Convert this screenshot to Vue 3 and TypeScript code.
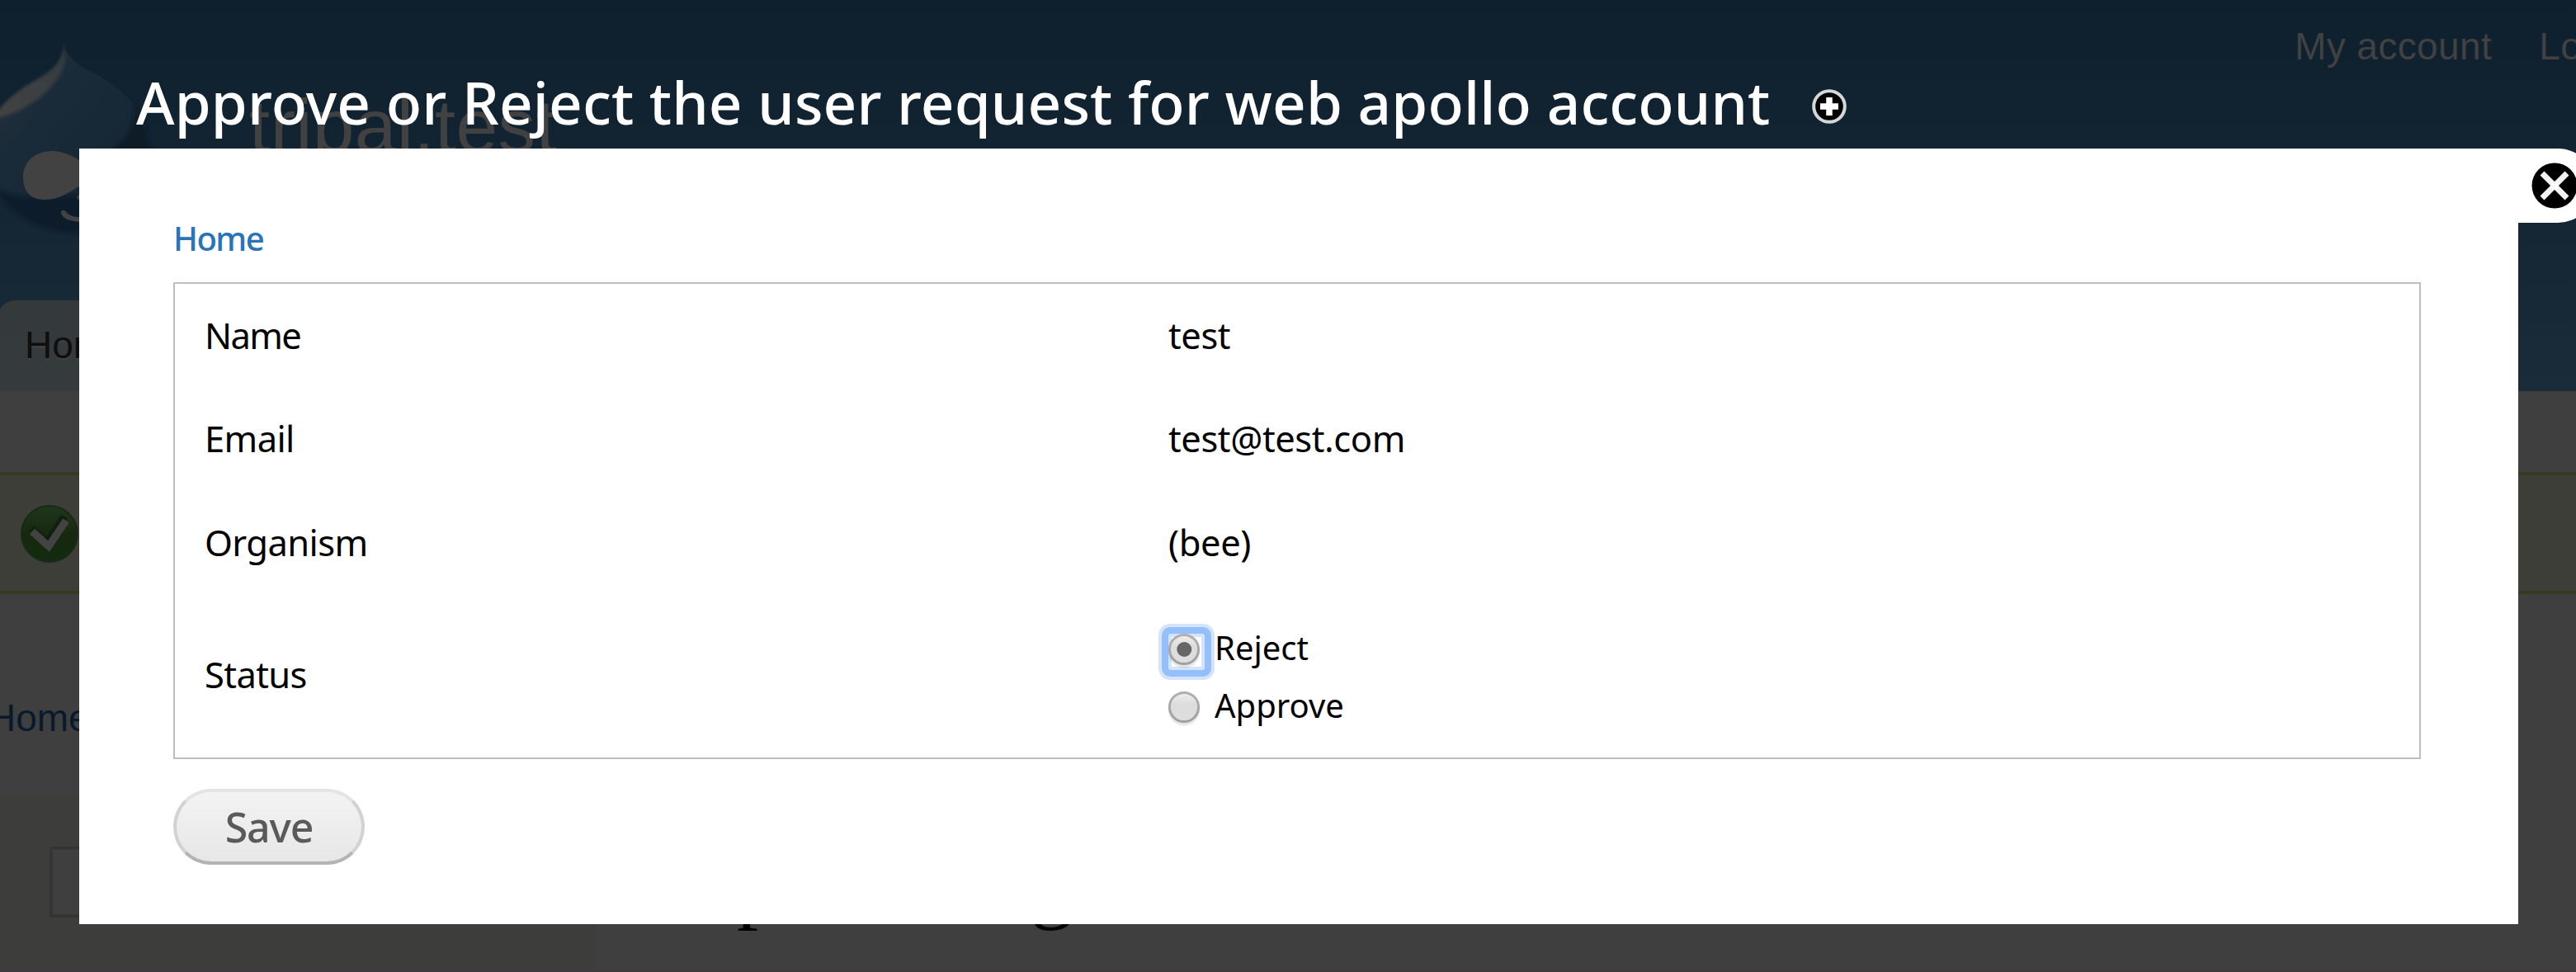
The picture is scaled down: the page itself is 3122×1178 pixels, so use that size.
<script setup lang="ts">
import { ref } from 'vue'

interface Row {
  label: string
  value: string
}

const rows: Row[] = [
  { label: 'Name', value: 'test' },
  { label: 'Email', value: 'test@test.com' },
  { label: 'Organism', value: '(bee)' },
]
const options: string[] = ['Reject', 'Approve']
const status = ref<string>('Reject')
</script>

<template>
  <div class="screen">
    <div class="page">
      <header class="header">
        <div class="top">
          <svg class="logo" width="190" height="290" viewBox="0 0 190 290">
            <defs>
              <linearGradient id="drop" x1="0" y1="0" x2="1" y2="1">
                <stop offset="0" stop-color="#2a343c" />
                <stop offset=".35" stop-color="#192a38" />
                <stop offset=".65" stop-color="#162735" />
                <stop offset="1" stop-color="#101d28" />
              </linearGradient>
              <linearGradient id="shine" x1="1" y1="0" x2="0" y2="1">
                <stop offset="0" stop-color="#343b40" />
                <stop offset="1" stop-color="#444444" />
              </linearGradient>
              <filter id="soft" x="-10%" y="-10%" width="120%" height="120%">
                <feGaussianBlur stdDeviation="2" />
              </filter>
            </defs>
            <path d="M77 53C80 66 90 76 105 84C145 103 182 135 182 184C182 240 137 281 84 281C48 281 12 262 -6 226V138C10 118 28 106 46 96C66 84 76 74 77 53Z" fill="url(#drop)" />
            <path d="M162 128C166 158 146 178 128 188L182 188C182 164 175 143 162 128Z" fill="#101c26" filter="url(#soft)" />
            <path d="M-6 228C25 245 60 236 100 238V282C50 284 12 262 -6 228Z" fill="#111f2a" filter="url(#soft)" />
            <path d="M77 57C79 66 80 76 75 86C62 112 30 136 -4 143V137C10 118 28 106 46 96C66 84 76 74 77 57Z" fill="url(#shine)" filter="url(#soft)" />
            <path d="M28 215C28 195 43 183 64 183C80 184 90 190 100 197V224C84 232 73 242 55 242C37 242 28 232 28 215Z" fill="#424242" />
            <path d="M93 240Q96 233 102 232V246Z" fill="#424242" />
            <path d="M74 257C76 253 79 255 82 259C88 263 94 263 102 264V269C86 269 74 265 74 257Z" fill="#424242" />
          </svg>
          <div class="site-name">tripal.test</div>
          <nav class="user-menu"><span>My account</span><span>Log out</span></nav>
        </div>
        <div class="tab">Home</div>
      </header>
      <div class="message">
        <svg class="ok" width="72" height="74" viewBox="0 0 72 74">
          <defs>
            <linearGradient id="green" x1="0" y1="0" x2="0" y2="1">
              <stop offset="0" stop-color="#1f361d" />
              <stop offset=".5" stop-color="#16290f" />
              <stop offset="1" stop-color="#132b0e" />
            </linearGradient>
          </defs>
          <circle cx="36" cy="37" r="34" fill="url(#green)" stroke="#182a17" stroke-width="2" />
          <path d="M15 34L34 51L55 20" fill="none" stroke="#122010" stroke-width="9" transform="translate(-1 -4)" />
          <path d="M15 34L35 52L56 21" fill="none" stroke="#434343" stroke-width="9" />
        </svg>
      </div>
      <div class="crumb-bg">Home</div>
      <div class="columns">
        <aside class="sidebar"><div class="search"></div></aside>
        <main class="main"><span class="letter-p">p</span><span class="letter-g">g</span></main>
      </div>
    </div>

    <div class="overlay">
      <div class="title-bar">
        <h1 class="title">Approve or Reject the user request for web apollo account</h1>
        <svg class="plus" width="42" height="42" viewBox="0 0 42 42">
          <circle cx="21" cy="21" r="18.8" fill="#000" stroke="#d4d6d8" stroke-width="4" />
          <path d="M21 10V32M10 21H32" stroke="#fff" stroke-width="7.5" />
        </svg>
      </div>
      <div class="dialog">
        <div class="close">
          <svg width="56" height="58" viewBox="0 0 56 58">
            <circle cx="28" cy="29" r="27.5" fill="#000" />
            <path d="M13 14L43 44M43 14L13 44" stroke="#f2f2f2" stroke-width="7" />
            <circle cx="28" cy="29" r="5" fill="#fff" />
          </svg>
        </div>
        <a class="crumb">Home</a>
        <div class="table">
          <div v-for="row in rows" :key="row.label" class="row">
            <div :class="['label', row.label.toLowerCase()]">{{ row.label }}</div>
            <div class="value">{{ row.value }}</div>
          </div>
          <div class="row status-row">
            <div class="label status">Status</div>
            <div class="radios">
              <label v-for="opt in options" :key="opt" class="option" @click="status = opt">
                <svg class="radio" width="68" height="68" viewBox="0 0 68 68">
                  <defs>
                    <linearGradient id="knob" x1="0" y1="0" x2="0" y2="1">
                      <stop offset="0" stop-color="#f0f0f0" />
                      <stop offset=".4" stop-color="#dcdcdc" />
                      <stop offset="1" stop-color="#dedede" />
                    </linearGradient>
                    <linearGradient id="rim" x1="0" y1="0" x2="0" y2="1">
                      <stop offset="0" stop-color="#b0b0b0" />
                      <stop offset="1" stop-color="#a0a0a0" />
                    </linearGradient>
                  </defs>
                  <g v-if="status === opt">
                    <rect x="0" y="0" width="68" height="68" rx="14" fill="#d4e4fc" />
                    <rect x="4" y="4" width="60" height="60" rx="10" fill="#94bff9" />
                    <rect x="12" y="12" width="44" height="44" rx="3" fill="#d4e4fc" />
                    <rect x="16" y="16" width="36" height="36" fill="#fff" />
                  </g>
                  <circle cx="31" cy="34.5" r="19" fill="#000" fill-opacity=".09" />
                  <circle cx="31" cy="31" r="17.6" fill="url(#knob)" stroke="url(#rim)" stroke-width="3" />
                  <circle v-if="status === opt" cx="31.3" cy="31" r="9" fill="#666" />
                </svg>
                <span class="option-text">{{ opt }}</span>
              </label>
            </div>
          </div>
        </div>
        <button class="save">Save</button>
      </div>
    </div>
  </div>
</template>

<style>
body {
  margin: 0;
}
</style>

<style scoped>
.screen {
  position: relative;
  width: 3122px;
  height: 1178px;
  overflow: hidden;
  background: #3f3f3f;
  font-family: "Noto Sans", "Open Sans", sans-serif;
}
.page {
  display: flex;
  flex-direction: column;
  height: 1178px;
  box-sizing: border-box;
  border-bottom: 1px solid #3d383b;
  font-family: "Liberation Sans", Arial, sans-serif;
  font-size: 46px;
}
.header {
  display: flex;
  flex-direction: column;
  height: 474px;
  background: linear-gradient(#0e1f2e, #122332 38%, #1a2c3a);
}
.top {
  display: flex;
  height: 364px;
  color: #414141;
}
.logo {
  flex: none;
}
.site-name {
  margin: 100px 0 0 112px;
  font-size: 91px;
  line-height: 106px;
  letter-spacing: 0.35px;
}
.user-menu {
  display: flex;
  gap: 57px;
  margin: 28px -200px 0 auto;
  width: 541px;
  line-height: 56px;
  letter-spacing: 0.4px;
  white-space: nowrap;
}
.tab {
  width: 178px;
  height: 110px;
  margin-left: -3px;
  padding-left: 33px;
  border-radius: 22px 22px 0 0;
  background: linear-gradient(#34393c, #353a3d);
  color: #0e0e0e;
  text-shadow: 0 3px 0 #3e3e3e;
  line-height: 108px;
}
.message {
  display: flex;
  align-items: center;
  height: 140px;
  margin-top: 98px;
  padding: 0 0 0 24px;
  border-top: 4px solid #333a1f;
  border-bottom: 4px solid #333a1f;
  background: #3e3e38;
}
.ok {
  margin-top: 1px;
}
.crumb-bg {
  margin: 120px 0 0 -14px;
  color: #081a2c;
  line-height: 60px;
}
.columns {
  display: flex;
  flex: 1;
  margin-top: 63px;
}
.sidebar {
  width: 722px;
  background: #3d3d3b;
}
.search {
  width: 500px;
  height: 78px;
  margin: 63px 0 0 60px;
  border: 4px solid #353535;
  background: #3f3f3f;
}
.main {
  position: relative;
  flex: 1;
  font-family: "Liberation Serif", serif;
  font-size: 104px;
  line-height: 100px;
  color: #000;
}
.letter-p {
  position: absolute;
  left: 171px;
  top: 58px;
}
.letter-g {
  position: absolute;
  left: 527px;
  top: 58px;
}
.overlay {
  position: absolute;
  inset: 0;
}
.title-bar {
  display: flex;
  align-items: center;
  height: 180px;
  padding-left: 165px;
}
.title {
  margin: 66px 0 0;
  width: 2031px;
  color: #fff;
  font-size: 71px;
  font-weight: 500;
  line-height: 115px;
  letter-spacing: 0.12px;
  white-space: nowrap;
}
.plus {
  flex: none;
  margin-top: 78px;
}
.dialog {
  position: relative;
  display: flex;
  flex-direction: column;
  align-items: flex-start;
  width: 2956px;
  height: 940px;
  margin-left: 96px;
  padding: 79px 118px 0 114px;
  box-sizing: border-box;
  background: #fff;
}
.close {
  position: absolute;
  left: 2956px;
  top: 0;
  display: flex;
  align-items: center;
  width: 93px;
  height: 90px;
  padding-left: 16px;
  box-sizing: border-box;
  border-radius: 0 45px 45px 0;
  background: #fff;
}
.crumb {
  color: #2b73b9;
  font-size: 40px;
  font-weight: 500;
  line-height: 60px;
  letter-spacing: -1.5px;
}
.table {
  align-self: stretch;
  height: 578px;
  margin-top: 23px;
  box-sizing: border-box;
  border: 2px solid #bebfba;
  color: #000;
  font-size: 43.5px;
}
.row {
  display: flex;
  align-items: center;
  height: 126px;
}
.row:first-child {
  height: 124px;
}
.label {
  width: 1168px;
  padding-left: 36px;
  box-sizing: border-box;
  letter-spacing: -0.6px;
}
.label.name {
  letter-spacing: -1.6px;
}
.value {
  padding-left: 36px;
  letter-spacing: -0.4px;
}
.row.status-row {
  height: 198px;
}
.label.status {
  margin-top: -4px;
}
.radios {
  display: flex;
  flex-direction: column;
  gap: 2px;
  padding: 12px 0 0 24px;
  font-size: 40px;
}
.option {
  display: flex;
  align-items: center;
  height: 68px;
}
.option-text {
  margin-top: -11px;
}
.radio {
  flex: none;
}
.save {
  width: 232px;
  height: 92px;
  margin-top: 36px;
  border: 4px solid;
  border-color: #e4e4e4 #d2d2d2 #b4b4b4;
  border-radius: 46px;
  background: linear-gradient(#f3f3f3, #e7e7e7);
  color: #5a5a5a;
  font-family: inherit;
  font-size: 50px;
  font-weight: 500;
  line-height: 80px;
  letter-spacing: -1.2px;
  padding: 0;
}
</style>
